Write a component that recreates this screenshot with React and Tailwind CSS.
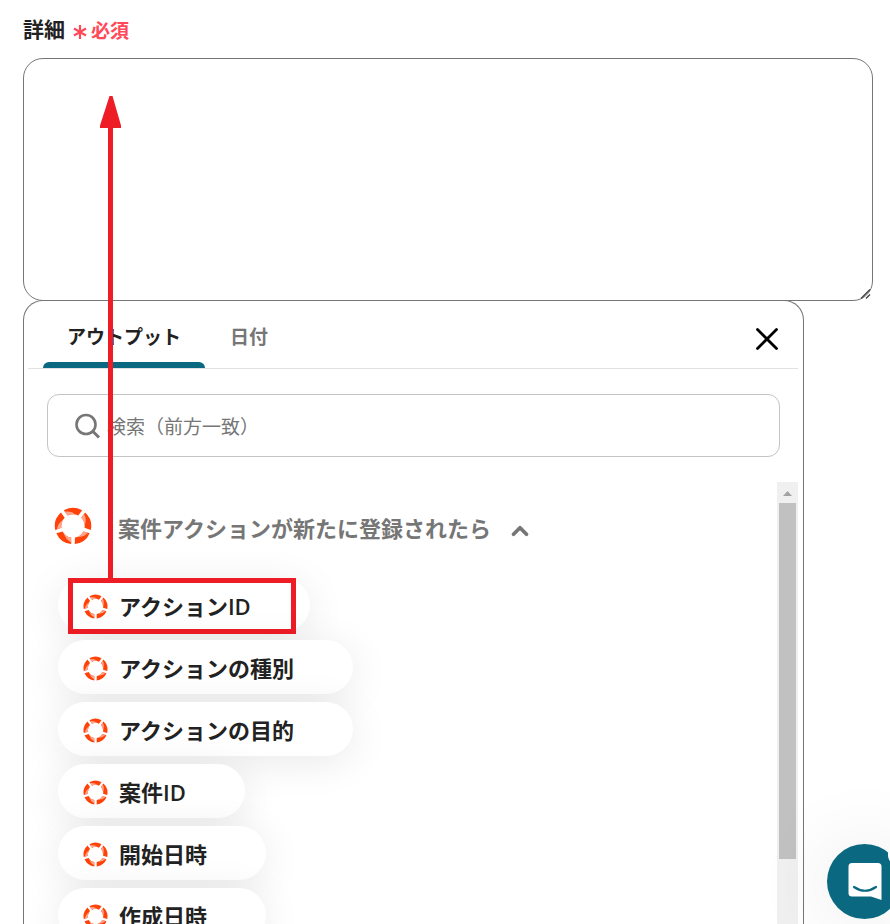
import React from 'react';
import { ChevronUp } from 'lucide-react';

const outputs = [
  { name: 'アクション', suffix: 'ID', highlighted: true },
  { name: 'アクションの種別' },
  { name: 'アクションの目的' },
  { name: '案件', suffix: 'ID' },
  { name: '開始日時' },
  { name: '作成日時' },
];

// Ring logo, five shaded segments
const RingLogo = ({ className }) => (
  <svg viewBox="0 0 40 40" className={className} aria-hidden="true">
    {[0, 72, 144, 216, 288].map((angle) => (
      <g key={angle} transform={`rotate(${angle} 20 20)`}>
        <path d="M10.300 3.500A19.200 19.200 0 0 1 29.700 3.500L25.500 9A12.300 12.300 0 0 0 14.500 9Z" fill="#ff4208" />
        <path d="M11.300 5Q18 3.800 23.500 8.300A12.300 12.300 0 0 0 14.500 9Z" fill="#ffa58c" />
      </g>
    ))}
  </svg>
);

const SearchIcon = () => (
  <svg viewBox="0 0 26 26" className="h-[26px] w-[26px] shrink-0" fill="none" stroke="#767676" aria-hidden="true">
    <circle cx="11" cy="11.500" r="9.500" strokeWidth="2.600" />
    <path d="M17.500 18l6.500 6.500" strokeWidth="3" />
  </svg>
);

const OutputChip = ({ name, suffix, highlighted }) => (
  <li className="relative">
    <button
      type="button"
      className="flex h-[54px] items-center gap-[11px] rounded-full bg-white pt-[2px] pr-[59px] pl-[25px] text-[22px] font-bold whitespace-nowrap text-[#222] shadow-[0_6px_40px_rgba(0,0,0,0.09)]"
    >
      <RingLogo className="h-[25px] w-[25px]" />
      <span>
        {name}
        {suffix && <span className="font-semibold">{suffix}</span>}
      </span>
    </button>
    {highlighted && (
      <div className="pointer-events-none absolute top-0 left-[10px] h-14 w-[228px] border-[5px] border-[#ee1c25]" />
    )}
  </li>
);

const Scrollbar = () => (
  <div className="flex w-[21px] shrink-0 flex-col items-center bg-[#f0f0f0]" aria-hidden="true">
    <svg viewBox="0 0 21 21" className="h-[21px] w-[21px] shrink-0">
      <path d="M6 14l4.500-5 4.500 5z" fill="#a3a3a3" />
    </svg>
    <div className="h-[356px] w-[17px] shrink-0 bg-[#c1c1c1]" />
  </div>
);

const OutputPanel = () => (
  <section className="-mt-px mr-[69px] flex min-h-0 flex-1 flex-col rounded-t-[20px] border border-b-0 border-[#767676] pr-[5px] pl-1">
    <div className="flex h-[68px] shrink-0 items-stretch border-b border-[#e2e2e2] pr-[18px] pl-[15px] text-[19px] font-bold">
      <button type="button" className="relative w-[162px] pt-[6px] text-[#222]">
        アウトプット
        <span className="absolute inset-x-0 bottom-0 h-[6px] rounded-t-md bg-[#0a6980]" />
      </button>
      <button type="button" className="w-[88px] pt-[6px] text-[#767676]">日付</button>
      <button type="button" aria-label="閉じる" className="ml-auto pt-2 text-black">
        <svg viewBox="0 0 26 26" className="h-[26px] w-[26px]" stroke="currentColor" strokeWidth="2.800" strokeLinecap="round" aria-hidden="true">
          <path d="M3.500 3.500l19 19M22.500 3.500l-19 19" />
        </svg>
      </button>
    </div>

    <label className="mr-[18px] ml-[19px] mt-[25px] flex h-[63px] shrink-0 items-center gap-[6px] rounded-xl border border-[#c4c4c4] pl-[27px]">
      <SearchIcon />
      <input
        type="text"
        aria-label="検索"
        placeholder="検索（前方一致）"
        className="min-w-0 flex-1 bg-transparent pt-1 text-[19px] font-normal text-[#222] outline-none placeholder:text-[#767676]"
      />
    </label>

    <div className="mt-[25px] flex min-h-0 flex-1">
      <div className="min-w-0 flex-1 pl-[26px]">
        <button type="button" className="mt-[25px] flex h-[38px] items-center text-[22px] font-bold text-[#767676]">
          <RingLogo className="h-[38px] w-[38px]" />
          <span className="ml-[26px] pt-1">案件アクションが新たに登録されたら</span>
          <ChevronUp size={26} strokeWidth={3.5} className="mt-[10px] ml-4" />
        </button>
        <ul className="mt-[33px] ml-1 flex flex-col gap-2">
          {outputs.map((output) => (
            <OutputChip key={output.name} {...output} />
          ))}
        </ul>
      </div>
      <Scrollbar />
    </div>
  </section>
);

const ChatLauncher = () => (
  <button
    type="button"
    aria-label="チャット"
    className="fixed -right-3 bottom-[5px] h-[75px] w-[75px] rounded-full bg-[#0a6980] shadow-[0_2px_80px_rgba(0,0,0,0.1)]"
  >
    <svg viewBox="0 0 75 75" className="h-full w-full" aria-hidden="true">
      <path d="M25 19h26a3.500 3.500 0 0 1 3.500 3.500V56L44 52.500H25a3.500 3.500 0 0 1-3.500-3.500V22.500A3.500 3.500 0 0 1 25 19z" fill="#fff" />
      <path d="M27 43q11 7.500 22 0" fill="none" stroke="#0a6980" strokeWidth="2.200" strokeLinecap="round" />
      <circle cx="72" cy="11" r="11" fill="#fff" />
    </svg>
  </button>
);

function App() {
  return (
    <div className="relative flex h-screen flex-col overflow-hidden bg-white pr-[17px] pl-[23px] font-['Open_Sans','Noto_Sans_CJK_JP',sans-serif]">
      <label htmlFor="detail" className="flex h-[58px] shrink-0 items-center pt-[2px] text-[21px] font-bold text-[#222]">
        詳細
        <span className="ml-2 flex items-center gap-1 pt-[2px] text-[19px] text-[#ff4858]">
          <svg viewBox="0 0 14 14" className="mt-[2px] h-[14px] w-[14px]" stroke="currentColor" strokeWidth="2.200" aria-hidden="true">
            <path d="M7 0v14M1 3.500l12 7M13 3.500l-12 7" />
          </svg>
          必須
        </span>
      </label>

      <div className="relative shrink-0">
        <textarea id="detail" className="block h-[243px] w-full resize-none rounded-[20px] border border-[#767676] p-4 text-lg outline-none" />
        <svg viewBox="0 0 12 12" className="absolute right-[1px] bottom-[1px] h-3 w-3" stroke="#444" strokeWidth="1.400" aria-hidden="true">
          <path d="M1 10.500l9-9M6 10.500l4-4" />
        </svg>
      </div>

      <OutputPanel />

      {/* Drag direction from the chip to the text area */}
      <svg viewBox="0 0 22 484" className="pointer-events-none absolute top-24 left-[100px] h-[484px] w-[22px]" fill="#ee1c25" aria-hidden="true">
        <path d="M9.500 0h3L21 29.500V32H0V29.500z" />
        <path d="M8 31h5v453H8z" />
      </svg>

      <ChatLauncher />
    </div>
  );
}

export default App;
